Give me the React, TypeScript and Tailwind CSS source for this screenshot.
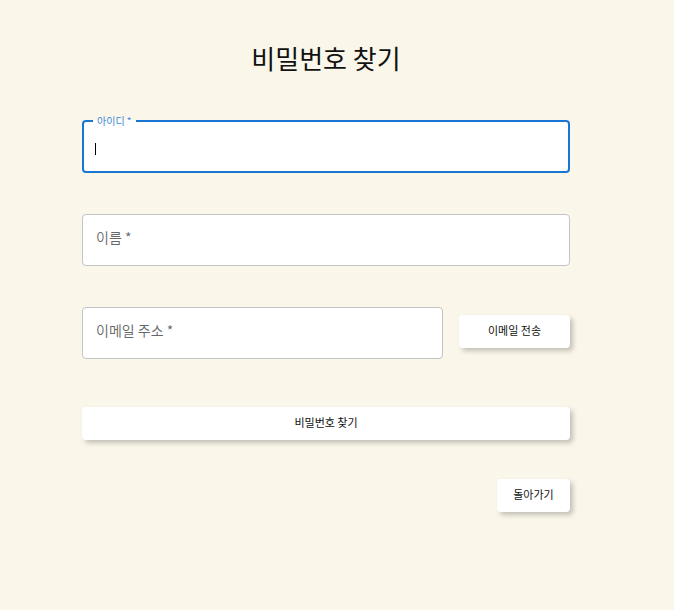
import React from "react"

const font = { fontFamily: '"Noto Sans CJK KR", "Noto Sans", sans-serif' }

function FocusedField({ label }: { label: string }) {
  return (
    <fieldset className="relative h-[57px] -mt-[5px] rounded-[4px] border-2 border-[#1976d2] bg-white px-[8px]">
      <legend className="ml-[1px] px-[4px] text-[10px] leading-[10px] text-[#3b8ad9]">{label}</legend>
      <div className="flex h-[42px] items-center pl-[3px]">
        <span className="mt-[3px] h-[12px] w-[1px] bg-black" />
      </div>
    </fieldset>
  )
}

function Field({ label, className = "" }: { label: string; className?: string }) {
  return (
    <div className={`flex h-[52px] items-center rounded-[4px] border border-[#c4c4c4] bg-white pl-[13px] ${className}`}>
      <span className="-mt-[6px] text-[14px] text-black/60">{label}</span>
    </div>
  )
}

function Btn({ children, className = "" }: { children: React.ReactNode; className?: string }) {
  return (
    <button className={`h-[33px] rounded-[4px] bg-white pb-[3px] text-[11px] font-normal text-[#111] shadow-[3px_3px_5px_rgba(0,0,0,0.22)] ${className}`}>
      {children}
    </button>
  )
}

export default function App() {
  return (
    <div className="min-h-screen bg-[#faf6ea]" style={font}>
      <div className="ml-[82px] w-[488px] pt-[38px]">
        <h1 className="text-center text-[26px] font-normal leading-[40px] text-[#111]">비밀번호 찾기</h1>
        <div className="mt-[43px] flex flex-col">
          <FocusedField label="아이디 *" />
          <div className="mt-[41px]">
            <Field label="이름 *" />
          </div>
          <div className="mt-[41px] flex items-start gap-[16px]">
            <Field label="이메일 주소 *" className="w-[361px]" />
            <Btn className="mt-[8px] w-[111px]">이메일 전송</Btn>
          </div>
          <Btn className="mt-[48px] w-full">비밀번호 찾기</Btn>
          <div className="mt-[39px] flex justify-end">
            <Btn className="w-[73px]">돌아가기</Btn>
          </div>
        </div>
      </div>
    </div>
  )
}
